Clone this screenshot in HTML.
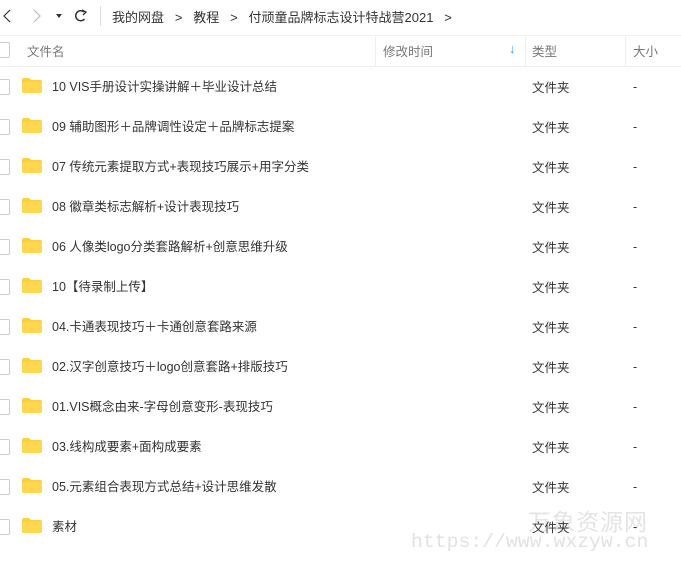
<!DOCTYPE html>
<html><head><meta charset="utf-8"><style>
body{margin:0;width:681px;height:578px;background:#fff;font-family:"Liberation Sans","Noto Sans CJK SC",sans-serif;color:#333;position:relative;overflow:hidden;font-size:12.5px}
.a{position:absolute;white-space:nowrap}
.cb{position:absolute;left:-6px;width:14px;height:14px;border:1px solid #ccc;border-radius:2px;background:#fff}
.fd{position:absolute;left:22px;width:20px;height:15px}
.vl{position:absolute;top:36px;width:1px;height:30px;background:#eee}
</style></head><body>
<svg class="a" style="left:0;top:8px" width="100" height="16"><path d="M10 2 L4 8 L10 14" stroke="#333" fill="none" stroke-width="1.2"/><path d="M34 2 L40 8 L34 14" stroke="#bbb" fill="none" stroke-width="1.2"/><path d="M56 6 L62 6 L59 10Z" fill="#333"/><path d="M84 4 A5 5 0 1 0 84.5 11" stroke="#333" fill="none" stroke-width="1.5"/><path d="M82 2 L86 4 L83 7" stroke="#333" fill="none" stroke-width="1.3"/></svg>
<div class="a" style="left:100px;top:6px;width:1px;height:20px;background:#ddd"></div>
<div class="a" style="left:112px;top:7px;font-size:13px">我的网盘 &nbsp;&nbsp;&gt;&nbsp;&nbsp; 教程 &nbsp;&nbsp;&gt;&nbsp;&nbsp; 付顽童品牌标志设计特战营2021 &nbsp;&nbsp;&gt;</div>
<div class="a" style="left:0;top:35px;width:681px;height:1px;background:#f0f0f0"></div>
<div class="a" style="left:0;top:66px;width:681px;height:1px;background:#f0f0f0"></div>
<div class="vl" style="left:375px"></div><div class="vl" style="left:525px"></div><div class="vl" style="left:625px"></div>
<div class="cb" style="top:42px"></div>
<div class="a" style="left:27px;top:41px;color:#777">文件名</div>
<div class="a" style="left:383px;top:41px;color:#777">修改时间</div>
<div class="a" style="left:509px;top:41px;color:#3a9bf0;font-size:13px">&#x2193;</div>
<div class="a" style="left:532px;top:41px;color:#777">类型</div>
<div class="a" style="left:633px;top:41px;color:#777">大小</div>
<div class="a" style="left:528px;top:503px;font-size:23px;color:#e4e4e4;letter-spacing:1px">万象资源网</div>
<div class="a" style="left:411px;top:531px;font-size:19.8px;color:#e2e2e2;font-family:'Liberation Mono',monospace">https://www.wxzyw.cn</div>
<div id="rows"></div>
<script>
var n=["10 VIS手册设计实操讲解＋毕业设计总结","09 辅助图形＋品牌调性设定＋品牌标志提案","07 传统元素提取方式+表现技巧展示+用字分类","08 徽章类标志解析+设计表现技巧","06 人像类logo分类套路解析+创意思维升级","10【待录制上传】","04.卡通表现技巧＋卡通创意套路来源","02.汉字创意技巧＋logo创意套路+排版技巧","01.VIS概念由来-字母创意变形-表现技巧","03.线构成要素+面构成要素","05.元素组合表现方式总结+设计思维发散","素材"];
var h="";n.forEach(function(t,i){var y=76+i*40;h+='<div class="cb" style="top:'+(y+3)+'px"></div><svg class="fd" style="top:'+(y+2)+'px" viewBox="0 0 20 15"><path d="M0 2 Q0 0 2 0 L7 0 L9 2 L18 2 Q20 2 20 4 L20 13 Q20 15 18 15 L2 15 Q0 15 0 13Z" fill="#FFCE3D"/><path d="M0 4 L20 4 L20 13 Q20 15 18 15 L2 15 Q0 15 0 13Z" fill="#FFD84F"/></svg><div class="a" style="left:52px;top:'+y+'px">'+t+'</div><div class="a" style="left:532px;top:'+(y+1)+'px">文件夹</div><div class="a" style="left:633px;top:'+(y+4)+'px">-</div>';});
document.getElementById("rows").innerHTML=h;
</script>
</body></html>
